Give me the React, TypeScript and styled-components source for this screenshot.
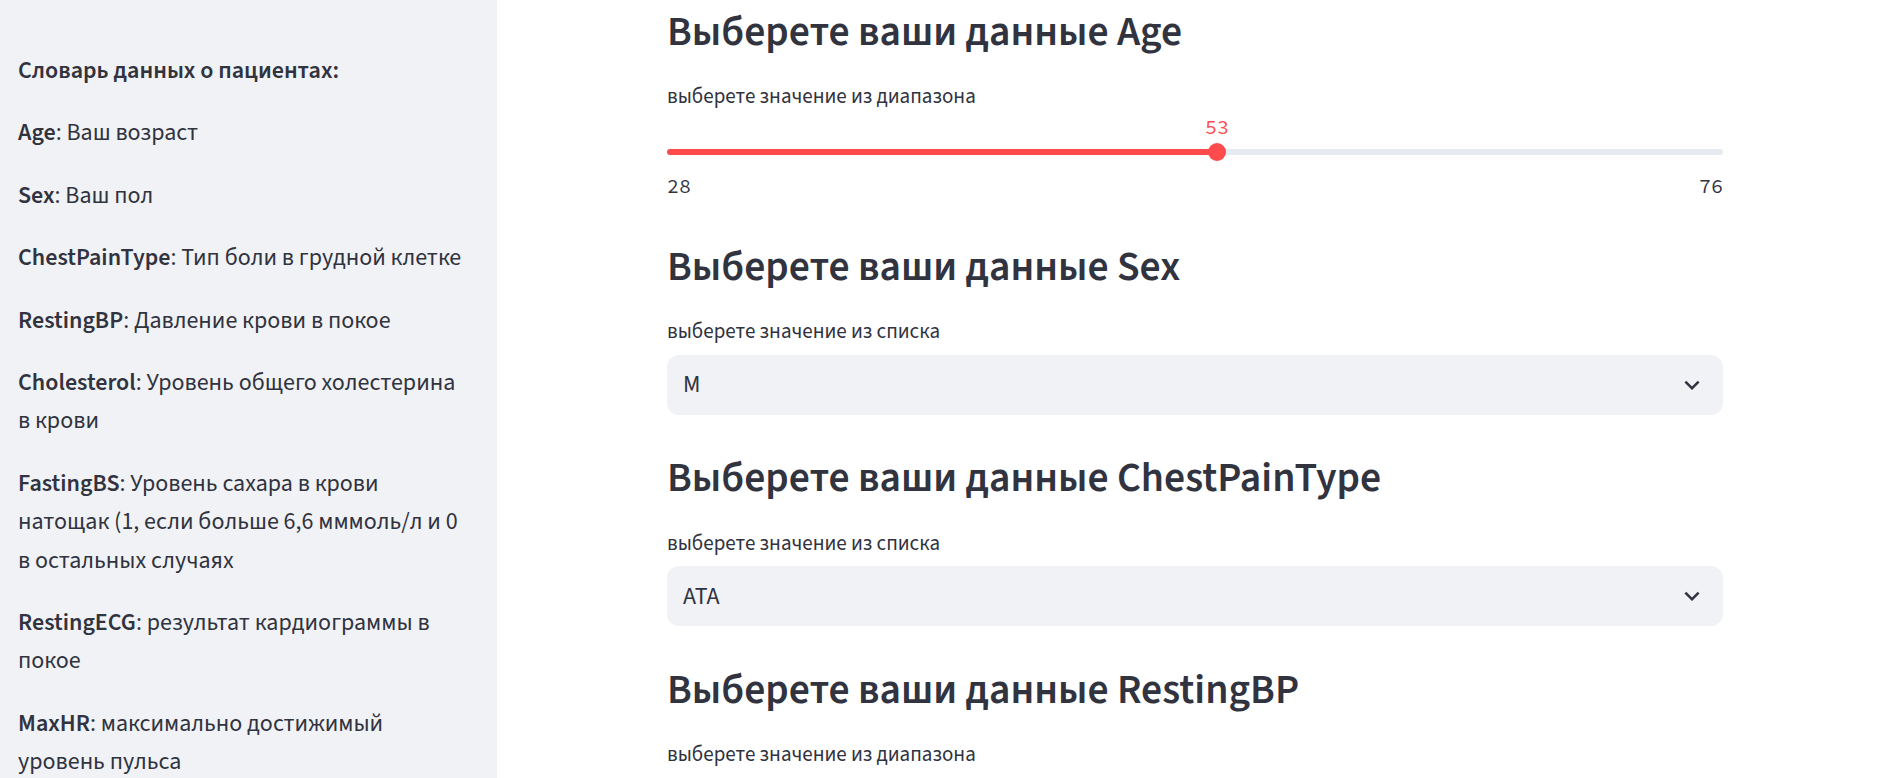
import React from "react";
import styled, { createGlobalStyle } from "styled-components";

const GlobalStyle = createGlobalStyle`
  html, body {
    margin: 0;
    padding: 0;
    background: #ffffff;
    font-family: "Source Sans 3", "Source Sans Pro", Lato, "Noto Sans", sans-serif;
    color: #31333f;
  }
  #root { height: 778px; overflow: hidden; }
`;

const Page = styled.div`
  display: flex;
  height: 778px;
  overflow: hidden;
`;

const Sidebar = styled.aside`
  flex: 0 0 497px;
  background: #f0f2f6;
  padding: 52px 0 0 18px;
  box-sizing: border-box;
  overflow: hidden;
`;

const Para = styled.p`
  margin: 0 0 24px 0;
  font-size: 24px;
  line-height: 38.4px;
  white-space: nowrap;
  color: #31333f;
`;

const Key = styled.strong`
  font-weight: 600;
`;

const Main = styled.main`
  flex: 1;
  padding: 6.7px 0 0 170px;
  box-sizing: border-box;
`;

const Block = styled.div`
  width: 1056px;
  display: flex;
  flex-direction: column;
`;

const Section = styled.section<{ $after: number }>`
  display: flex;
  flex-direction: column;
  margin-bottom: ${(p) => p.$after}px;
`;

const Heading = styled.h3`
  margin: 0 0 23px 0;
  font-size: 41.6px;
  line-height: 50.4px;
  font-weight: 600;
  color: #31333f;
  white-space: nowrap;
`;

const Label = styled.label`
  display: block;
  font-size: 21px;
  line-height: 33.6px;
  color: #31333f;
  margin-bottom: 6px;
`;

const SliderBody = styled.div`
  padding-top: 29.5px;
`;

const Track = styled.div`
  position: relative;
  height: 6px;
  border-radius: 3px;
  background: #e6eaf1;
`;

const Fill = styled.div`
  position: absolute;
  left: 0;
  top: 0;
  bottom: 0;
  border-radius: 3px;
  background: #ff4b4b;
`;

const Thumb = styled.div`
  position: absolute;
  top: 50%;
  width: 18px;
  height: 18px;
  border-radius: 50%;
  background: #ff4b4b;
  transform: translate(-50%, -50%);
`;

const ThumbValue = styled.div`
  position: absolute;
  top: -32px;
  transform: translateX(-50%);
  font-family: "Source Code Pro", "DejaVu Sans Mono", monospace;
  font-size: 20px;
  line-height: 20px;
  color: #ff4b4b;
  white-space: nowrap;
`;

const TickRow = styled.div`
  display: flex;
  justify-content: space-between;
  margin-top: 21px;
  font-family: "Source Code Pro", "DejaVu Sans Mono", monospace;
  font-size: 20px;
  line-height: 20px;
  color: #31333f;
`;

const SelectBox = styled.div`
  height: 60px;
  border-radius: 12px;
  background: #f0f2f6;
  display: flex;
  align-items: center;
  justify-content: space-between;
  padding: 0 16px 0 16px;
  box-sizing: border-box;
  font-size: 24px;
  color: #31333f;
`;

const Chevron = () => (
  <svg width="30" height="30" viewBox="0 0 24 24" aria-hidden="true">
    <path d="M16.59 8.59L12 13.17 7.41 8.59 6 10l6 6 6-6z" fill="#31333f" />
  </svg>
);

type SliderProps = { min: number; max: number; value: number };

const Slider = ({ min, max, value }: SliderProps) => {
  const pct = ((value - min) / (max - min)) * 100;
  return (
    <SliderBody>
      <Track>
        <Fill style={{ width: `${pct}%` }} />
        <ThumbValue style={{ left: `${pct}%` }}>{value}</ThumbValue>
        <Thumb style={{ left: `${pct}%` }} />
      </Track>
      <TickRow>
        <span>{min}</span>
        <span>{max}</span>
      </TickRow>
    </SliderBody>
  );
};

const Select = ({ value }: { value: string }) => (
  <SelectBox>
    <span>{value}</span>
    <Chevron />
  </SelectBox>
);

export default function App() {
  return (
    <>
      <GlobalStyle />
      <Page>
        <Sidebar>
          <Para>
            <Key>Словарь данных о пациентах:</Key>
          </Para>
          <Para>
            <Key>Age</Key>: Ваш возраст
          </Para>
          <Para>
            <Key>Sex</Key>: Ваш пол
          </Para>
          <Para>
            <Key>ChestPainType</Key>: Тип боли в грудной клетке
          </Para>
          <Para>
            <Key>RestingBP</Key>: Давление крови в покое
          </Para>
          <Para>
            <Key>Cholesterol</Key>: Уровень общего холестерина
            <br />в крови
          </Para>
          <Para>
            <Key>FastingBS</Key>: Уровень сахара в крови
            <br />
            натощак (1, если больше 6,6 мммоль/л и 0
            <br />в остальных случаях
          </Para>
          <Para>
            <Key>RestingECG</Key>: результат кардиограммы в
            <br />
            покое
          </Para>
          <Para>
            <Key>MaxHR</Key>: максимально достижимый
            <br />
            уровень пульса
          </Para>
        </Sidebar>
        <Main>
          <Block>
            <Section $after={45.7}>
              <Heading>Выберете ваши данные Age</Heading>
              <Label>выберете значение из диапазона</Label>
              <Slider min={28} max={76} value={53} />
            </Section>
            <Section $after={38.4}>
              <Heading>Выберете ваши данные Sex</Heading>
              <Label>выберете значение из списка</Label>
              <Select value="M" />
            </Section>
            <Section $after={38.4}>
              <Heading>Выберете ваши данные ChestPainType</Heading>
              <Label>выберете значение из списка</Label>
              <Select value="ATA" />
            </Section>
            <Section $after={38.4}>
              <Heading>Выберете ваши данные RestingBP</Heading>
              <Label>выберете значение из диапазона</Label>
            </Section>
          </Block>
        </Main>
      </Page>
    </>
  );
}
